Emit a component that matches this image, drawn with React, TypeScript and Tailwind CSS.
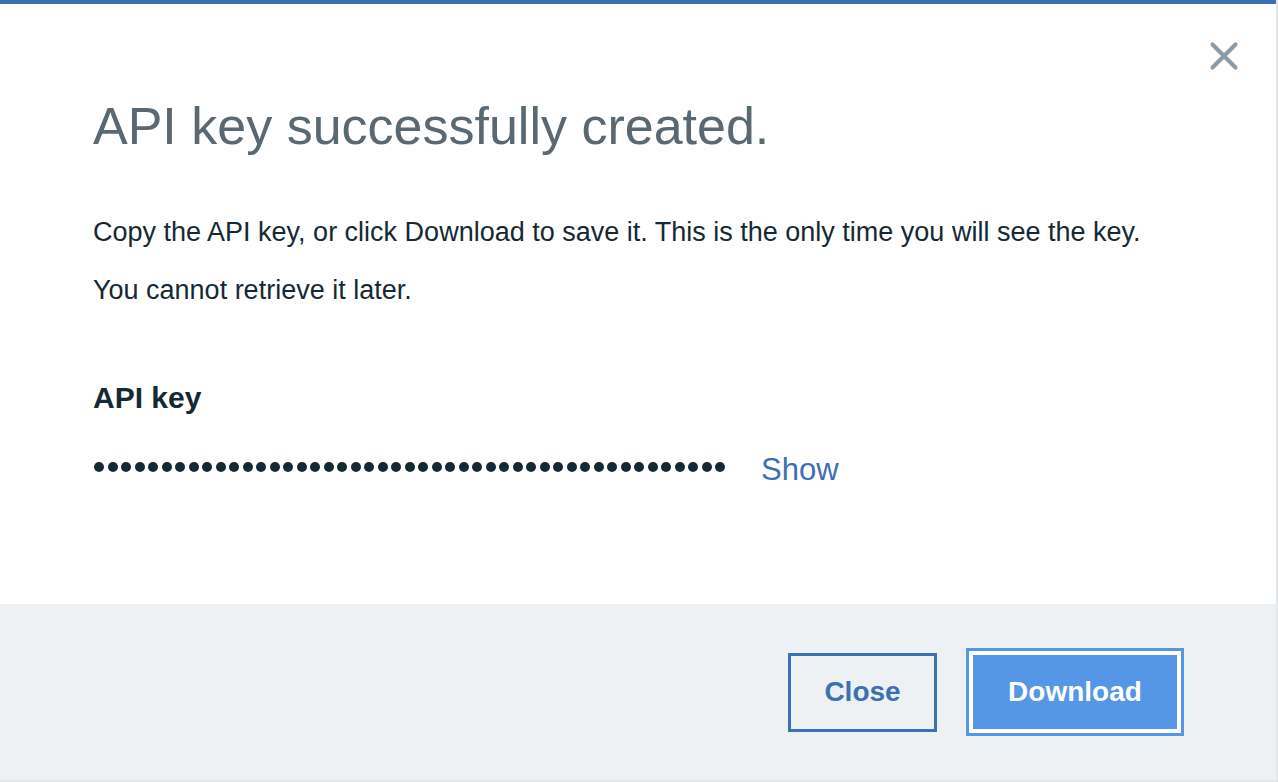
import { X } from "lucide-react";

const dots = Array.from({ length: 47 }, (_, i) => i);

export default function App() {
  return (
    <div
      className="h-[782px] w-[1278px] overflow-hidden bg-[#e4e7ea]"
      style={{ fontFamily: '"Liberation Sans", Arial, sans-serif' }}
    >
      <div className="flex h-[780px] w-[1276px] flex-col border-t-4 border-[#3d70b2] bg-white">
        <div className="relative flex-1 pl-[93px] pt-[92px]">
          <button className="absolute right-[29px] top-[29px] text-[#8c9ba5]">
            <X size={46} strokeWidth={2.2} />
          </button>

          <h1 className="text-[52px] font-light leading-[60px] text-[#5a6872]">
            API key successfully created.
          </h1>

          <p className="mt-[60px] text-[27px] leading-[32px] text-[#152935]">
            Copy the API key, or click Download to save it. This is the only time you will see the key.
          </p>
          <p className="mt-[26px] text-[27px] leading-[32px] text-[#152935]">
            You cannot retrieve it later.
          </p>

          <h2 className="mt-[75px] text-[30px] font-bold leading-[34px] text-[#152935]">
            API key
          </h2>

          <div className="mt-[35px] flex items-center">
            <div className="flex gap-[3.5px] pl-[1px]">
              {dots.map((d) => (
                <span key={d} className="block h-[10px] w-[10px] rounded-full bg-[#152935]" />
              ))}
            </div>
            <a className="ml-[36px] translate-y-[3px] text-[31px] leading-[34px] text-[#3d70b2]">Show</a>
          </div>
        </div>

        <div className="flex h-[176px] items-center justify-end bg-[#eef1f4] pr-[92px]">
          <button className="flex h-[79px] w-[149px] items-center justify-center border-[3px] border-[#3d70b2] text-[28px] font-bold text-[#3d70b2]">
            Close
          </button>
          <div className="ml-[29px] border-[3px] border-[#5596e6] bg-white p-[4px]">
            <button className="flex h-[74px] w-[204px] items-center justify-center bg-[#5596e6] text-[28px] font-bold text-white">
              Download
            </button>
          </div>
        </div>
      </div>
    </div>
  );
}
